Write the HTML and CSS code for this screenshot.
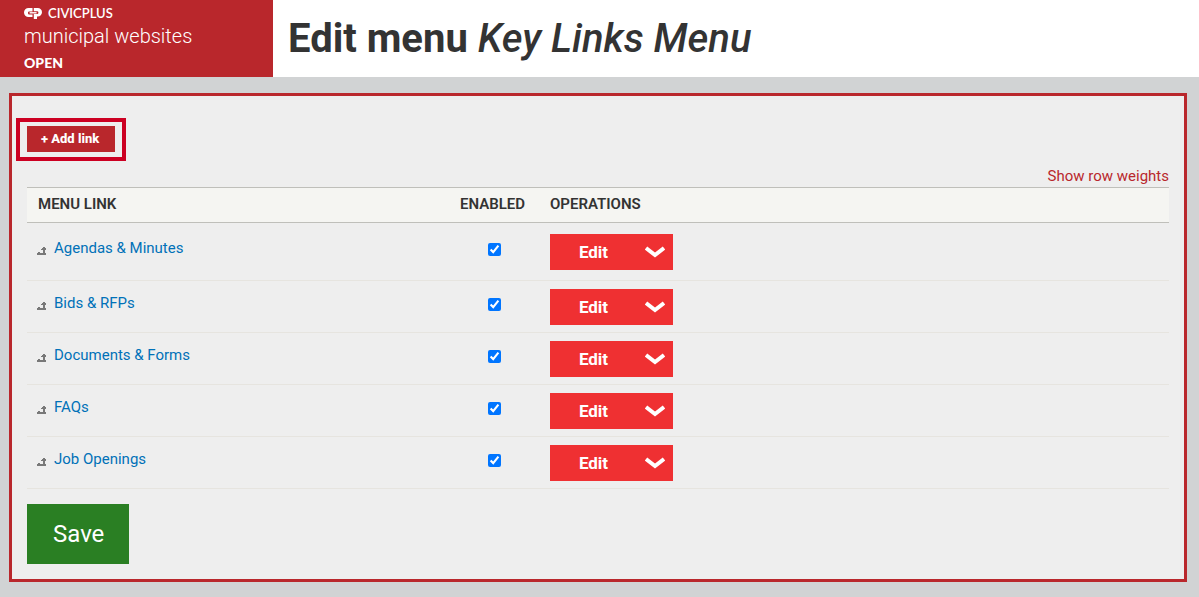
FILE: index.html
```html
<!DOCTYPE html>
<html lang="en">
<head>
    <meta charset="UTF-8">
    <meta name="viewport" content="width=device-width, initial-scale=1.0">
    <title>Edit menu Key Links Menu</title>
    <link rel="stylesheet" href="styles.css">
</head>
<body>
    <svg class="sprites" aria-hidden="true">
        <symbol id="drag-icon" viewBox="0 0 9 8">
            <path d="M0 6h1V5h2v1h3V3H4V2h1V1h1V0h2v1h1v2H8v3h1v2H0z"/>
        </symbol>
        <symbol id="chevron-icon" viewBox="0 0 20 12">
            <path d="M1 2l9 7 9-7" fill="none" stroke="currentColor" stroke-width="4"/>
        </symbol>
    </svg>

    <header class="header">
        <div class="brand">
            <div class="brand-company">
                <svg class="brand-mark" viewBox="0 0 18 11" aria-hidden="true">
                    <path d="M8.5 0H4.5a4.5 4.5 0 0 0 0 9h4V6.4H5.2a1.2 1.2 0 0 1-1.2-1.2v-.6a1.2 1.2 0 0 1 1.2-1.2h3.3z" fill="#fff"/>
                    <path d="M9.8 0h4a4.2 4.2 0 0 1 0 8.4H13V11H9.8V6h3.4a1.2 1.2 0 0 0 1.2-1.2v-.4a1.2 1.2 0 0 0-1.2-1.2H9.8z" fill="#fff"/>
                    <path d="M5.6 4.1h7v1.4h-7z" fill="#fff"/>
                </svg>
                <span>CIVICPLUS</span>
            </div>
            <div class="brand-product">municipal websites</div>
            <div class="brand-edition">OPEN</div>
        </div>
        <h1>Edit menu <em>Key Links Menu</em></h1>
    </header>

    <main class="panel">
        <div class="highlight">
            <button type="button" class="add-button">+ Add link</button>
        </div>

        <div class="weights">
            <a href="#">Show row weights</a>
        </div>

        <form>
            <table class="menu-table">
                <colgroup>
                    <col class="col-link">
                    <col class="col-enabled">
                    <col>
                </colgroup>
                <thead>
                    <tr>
                        <th>Menu link</th>
                        <th class="enabled">Enabled</th>
                        <th>Operations</th>
                    </tr>
                </thead>
                <tbody>
                    <tr>
                        <td>
                            <svg class="drag"><use href="#drag-icon"/></svg><a href="#">Agendas &amp; Minutes</a>
                        </td>
                        <td class="enabled"><input type="checkbox" aria-label="Enable Agendas &amp; Minutes" checked></td>
                        <td>
                            <div class="dropbutton">
                                <button type="button" class="edit">Edit</button>
                                <button type="button" class="toggle" aria-label="List additional actions"><svg><use href="#chevron-icon"/></svg></button>
                            </div>
                        </td>
                    </tr>
                    <tr>
                        <td>
                            <svg class="drag"><use href="#drag-icon"/></svg><a href="#">Bids &amp; RFPs</a>
                        </td>
                        <td class="enabled"><input type="checkbox" aria-label="Enable Bids &amp; RFPs" checked></td>
                        <td>
                            <div class="dropbutton">
                                <button type="button" class="edit">Edit</button>
                                <button type="button" class="toggle" aria-label="List additional actions"><svg><use href="#chevron-icon"/></svg></button>
                            </div>
                        </td>
                    </tr>
                    <tr>
                        <td>
                            <svg class="drag"><use href="#drag-icon"/></svg><a href="#">Documents &amp; Forms</a>
                        </td>
                        <td class="enabled"><input type="checkbox" aria-label="Enable Documents &amp; Forms" checked></td>
                        <td>
                            <div class="dropbutton">
                                <button type="button" class="edit">Edit</button>
                                <button type="button" class="toggle" aria-label="List additional actions"><svg><use href="#chevron-icon"/></svg></button>
                            </div>
                        </td>
                    </tr>
                    <tr>
                        <td>
                            <svg class="drag"><use href="#drag-icon"/></svg><a href="#">FAQs</a>
                        </td>
                        <td class="enabled"><input type="checkbox" aria-label="Enable FAQs" checked></td>
                        <td>
                            <div class="dropbutton">
                                <button type="button" class="edit">Edit</button>
                                <button type="button" class="toggle" aria-label="List additional actions"><svg><use href="#chevron-icon"/></svg></button>
                            </div>
                        </td>
                    </tr>
                    <tr>
                        <td>
                            <svg class="drag"><use href="#drag-icon"/></svg><a href="#">Job Openings</a>
                        </td>
                        <td class="enabled"><input type="checkbox" aria-label="Enable Job Openings" checked></td>
                        <td>
                            <div class="dropbutton">
                                <button type="button" class="edit">Edit</button>
                                <button type="button" class="toggle" aria-label="List additional actions"><svg><use href="#chevron-icon"/></svg></button>
                            </div>
                        </td>
                    </tr>
                </tbody>
            </table>

            <button type="submit" class="save-button">Save</button>
        </form>
    </main>
</body>
</html>
```
FILE: styles.css
```css
body {
    font-family: Roboto, sans-serif;
    font-size: 15px;
    color: #333333;
    background-color: #d1d3d4;
    margin: 0;
}

a {
    text-decoration: none;
}

a:hover {
    text-decoration: underline;
}

button {
    font-family: inherit;
    color: #ffffff;
    border: none;
    padding: 0;
    cursor: pointer;
}

.sprites {
    display: none;
}

.header {
    display: flex;
    background-color: #ffffff;
}

.brand {
    width: 273px;
    padding: 4px 24px 1px;
    box-sizing: border-box;
    background-color: #b9272c;
    color: #ffffff;
}

.brand-company {
    display: flex;
    align-items: center;
    gap: 6px;
    font-family: Lato, sans-serif;
    font-size: 13px;
    line-height: 18px;
    font-weight: 600;
}

.brand-mark {
    width: 18px;
    height: 11px;
}

.brand-product {
    font-size: 20px;
    line-height: 28px;
    font-weight: 300;
}

.brand-edition {
    font-family: Lato, sans-serif;
    font-size: 14px;
    line-height: 26px;
    font-weight: 900;
}

h1 {
    margin: 0;
    padding: 0 15px;
    font-size: 40px;
    line-height: 77px;
    font-weight: 700;
}

h1 em {
    font-weight: 500;
}

.panel {
    margin: 16px 12px 15px 9px;
    padding: 22px 15px 15px;
    border: 3px solid #b9272c;
    background-color: #eeeeee;
}

.highlight {
    display: table;
    margin-left: -11px;
    padding: 4px 7px 5px;
    border: 4px solid #cc0022;
}

.add-button {
    display: block;
    padding: 0 16px 0 14px;
    background-color: #b9272c;
    font-size: 13px;
    line-height: 26px;
    font-weight: 800;
}

.weights {
    padding-top: 4px;
    line-height: 22px;
    text-align: right;
}

.weights a {
    color: #b9272c;
}

.menu-table {
    width: 100%;
    table-layout: fixed;
    border-collapse: separate;
    border-spacing: 0;
}

.col-link {
    width: 420px;
}

.col-enabled {
    width: 91px;
}

th {
    padding: 0 12px 2px;
    border-top: 1px solid #bfbfba;
    border-bottom: 1px solid #bfbfba;
    background-color: #f5f5f2;
    line-height: 32px;
    text-align: left;
    text-transform: uppercase;
    font-weight: 600;
}

th:first-child {
    padding-left: 11px;
}

td {
    padding: 8px 12px 7px;
    border-bottom: 1px solid #e6e4df;
}

tbody tr:first-child td {
    padding-top: 11px;
    padding-bottom: 10px;
}

td:first-child {
    padding-left: 10px;
    line-height: 28px;
    vertical-align: top;
}

td a {
    color: #0071b8;
}

.drag {
    width: 9px;
    height: 8px;
    margin-right: 8px;
    fill: #787878;
    vertical-align: -2px;
}

th.enabled {
    padding-left: 0;
    padding-right: 0;
    text-align: center;
}

td.enabled {
    padding-left: 3px;
    padding-right: 0;
    vertical-align: top;
}

td input {
    display: block;
    margin: 9px auto 0;
}

.dropbutton {
    display: flex;
    width: 123px;
    background-color: #ef3032;
}

.edit {
    flex: 1;
    background: none;
    font-size: 17px;
    line-height: 36px;
    font-weight: 700;
}

.toggle {
    display: flex;
    align-items: center;
    justify-content: center;
    width: 36px;
    background: none;
}

.toggle svg {
    width: 20px;
    height: 12px;
}

.save-button {
    display: block;
    margin-top: 15px;
    padding: 0 25px 0 26px;
    background-color: #2a7f23;
    font-size: 24px;
    line-height: 60px;
}
```
